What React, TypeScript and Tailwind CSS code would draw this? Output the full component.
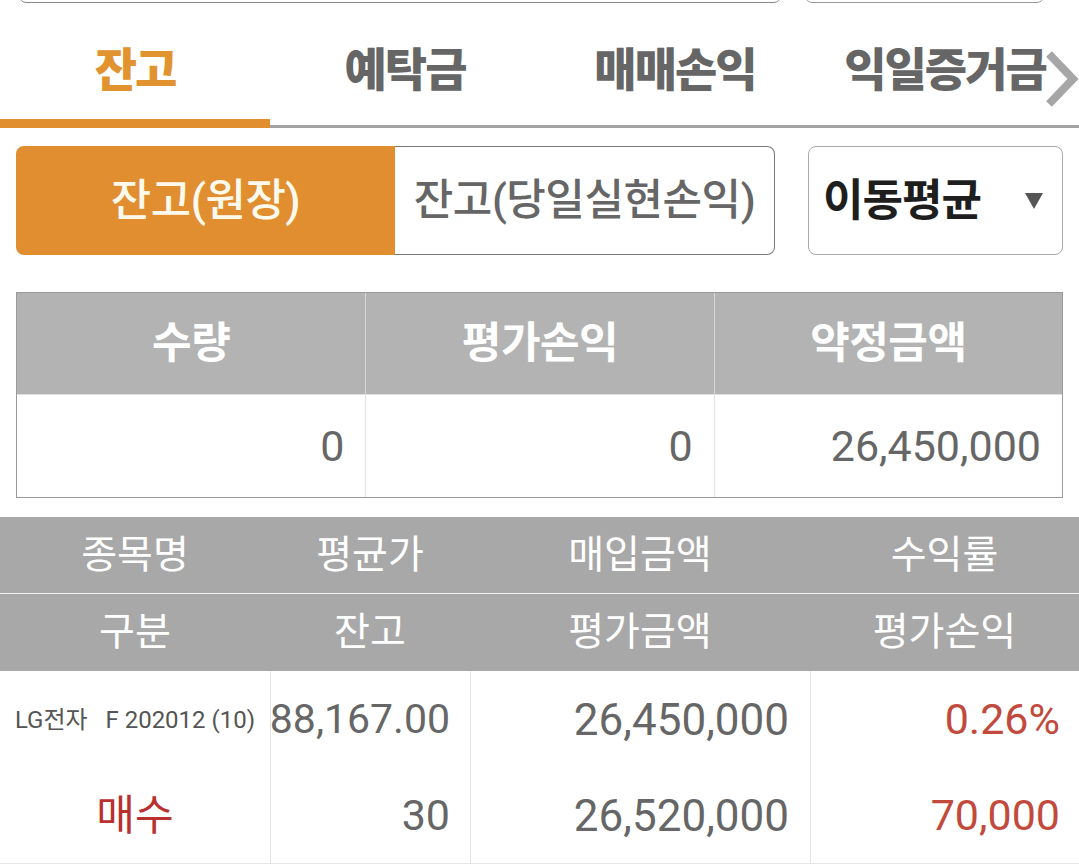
import React from 'react';

const tabs = ['잔고', '예탁금', '매매손익', '익일증거금'];

const summaryHeads = ['수량', '평가손익', '약정금액'];
const summaryValues = ['0', '0', '26,450,000'];

const detailHeadTop = ['종목명', '평균가', '매입금액', '수익률'];
const detailHeadBottom = ['구분', '잔고', '평가금액', '평가손익'];

const cols = 'grid grid-cols-[270px_200px_340px_1fr]';

export default function App() {
  return (
    <div
      className="w-full min-h-screen bg-white overflow-hidden"
      style={{ fontFamily: "Roboto, 'Noto Sans CJK KR', sans-serif" }}
    >
      {/* remnants of the boxes scrolled off the top */}
      <div className="h-[3px] overflow-hidden flex items-end">
        <div className="ml-[19px] w-[762px] h-[14px] flex-none border border-[#888] rounded-[8px]" />
        <div className="ml-[24px] w-[239px] h-[14px] flex-none border border-[#999] rounded-[8px]" />
      </div>

      {/* main tabs */}
      <div className="relative flex h-[125px] border-b-[3px] border-[#a3a3a3]">
        {tabs.map((t, i) => (
          <div
            key={t}
            className={
              'relative w-[270px] flex-none flex items-center justify-center pt-[12px] text-[46px] font-black tracking-[-2px] ' +
              (i === 0 ? 'text-[#e0932f]' : 'text-[#666]')
            }
          >
            {t}
            {i === 0 && (
              <div className="absolute left-0 right-0 bottom-[-3px] h-[9px] bg-[#e08e2e]" />
            )}
          </div>
        ))}
        <svg
          className="absolute right-0 top-[47px]"
          width="34"
          height="58"
          viewBox="0 0 34 58"
        >
          <polyline
            points="4,4 28,29 4,54"
            fill="none"
            stroke="#a6a6a6"
            strokeWidth="8"
          />
        </svg>
      </div>

      {/* segment buttons + dropdown */}
      <div className="flex px-[16px] mt-[18px]">
        <div className="w-[379px] h-[109px] flex-none flex items-center justify-center bg-[#e08e30] rounded-l-[8px] text-[44px] font-medium text-[#fff9ec] tracking-[-0.5px]">
          잔고(원장)
        </div>
        <div className="w-[380px] h-[109px] flex-none flex items-center justify-center border border-l-0 border-[#777] rounded-r-[8px] text-[43px] font-medium text-[#666] tracking-[-0.5px]">
          잔고(당일실현손익)
        </div>
        <div className="ml-[33px] w-[255px] h-[109px] flex-none flex items-center justify-between pl-[14px] pr-[18px] border border-[#aaa] rounded-[8px]">
          <span className="text-[44px] font-bold text-[#1e1e1e] tracking-[-1px]">이동평균</span>
          <svg width="20" height="18" viewBox="0 0 20 18">
            <polygon points="1,1 19,1 10,17" fill="#555" />
          </svg>
        </div>
      </div>

      {/* summary table */}
      <div className="mx-[16px] mt-[37px] border border-[#9a9a9a]">
        <div className="grid grid-cols-3 h-[101px] bg-[#b3b3b3]">
          {summaryHeads.map((h, i) => (
            <div
              key={h}
              className={
                'flex items-center justify-center text-[43px] font-bold text-white tracking-[-0.5px] ' +
                (i > 0 ? 'border-l border-[#d9d9d9]' : '')
              }
            >
              {h}
            </div>
          ))}
        </div>
        <div className="grid grid-cols-3 h-[103px] border-t border-[#dedede]">
          {summaryValues.map((v, i) => (
            <div
              key={i}
              className={
                'flex items-center justify-end pr-[21px] text-[43px] text-[#666] ' +
                (i > 0 ? 'border-l border-[#e3e3e3]' : '')
              }
            >
              {v}
            </div>
          ))}
        </div>
      </div>

      {/* detail table */}
      <div className="mt-[19px]">
        <div className={cols + ' h-[76px] bg-[#a8a8a8]'}>
          {detailHeadTop.map((h) => (
            <div key={h} className="flex items-center justify-center text-[39px] text-white">
              {h}
            </div>
          ))}
        </div>
        <div className="h-[1px] bg-[#f2f2f2]" />
        <div className={cols + ' h-[77px] bg-[#a8a8a8]'}>
          {detailHeadBottom.map((h) => (
            <div key={h} className="flex items-center justify-center text-[39px] text-white">
              {h}
            </div>
          ))}
        </div>

        <div className={cols + ' h-[97px]'}>
          <div className="flex items-center justify-center text-[24px] text-[#555] whitespace-pre">
            {'LG전자   F 202012 (10)'}
          </div>
          <div className="flex items-center justify-end pr-[20px] border-l border-[#e5e5e5] text-[41px] text-[#666]">
            88,167.00
          </div>
          <div className="flex items-center justify-end pr-[21px] border-l border-[#e5e5e5] text-[44px] text-[#666]">
            26,450,000
          </div>
          <div className="flex items-center justify-end pr-[19px] border-l border-[#e5e5e5] text-[43px] text-[#c24a3c]">
            0.26%
          </div>
        </div>
        <div className={cols + ' h-[96px] border-b border-[#e5e5e5]'}>
          <div className="flex items-center justify-center text-[42px] text-[#b8302f]">
            매수
          </div>
          <div className="flex items-center justify-end pr-[20px] border-l border-[#e5e5e5] text-[43px] text-[#666]">
            30
          </div>
          <div className="flex items-center justify-end pr-[21px] border-l border-[#e5e5e5] text-[44px] text-[#666]">
            26,520,000
          </div>
          <div className="flex items-center justify-end pr-[19px] border-l border-[#e5e5e5] text-[43px] text-[#c24a3c]">
            70,000
          </div>
        </div>
      </div>
    </div>
  );
}
